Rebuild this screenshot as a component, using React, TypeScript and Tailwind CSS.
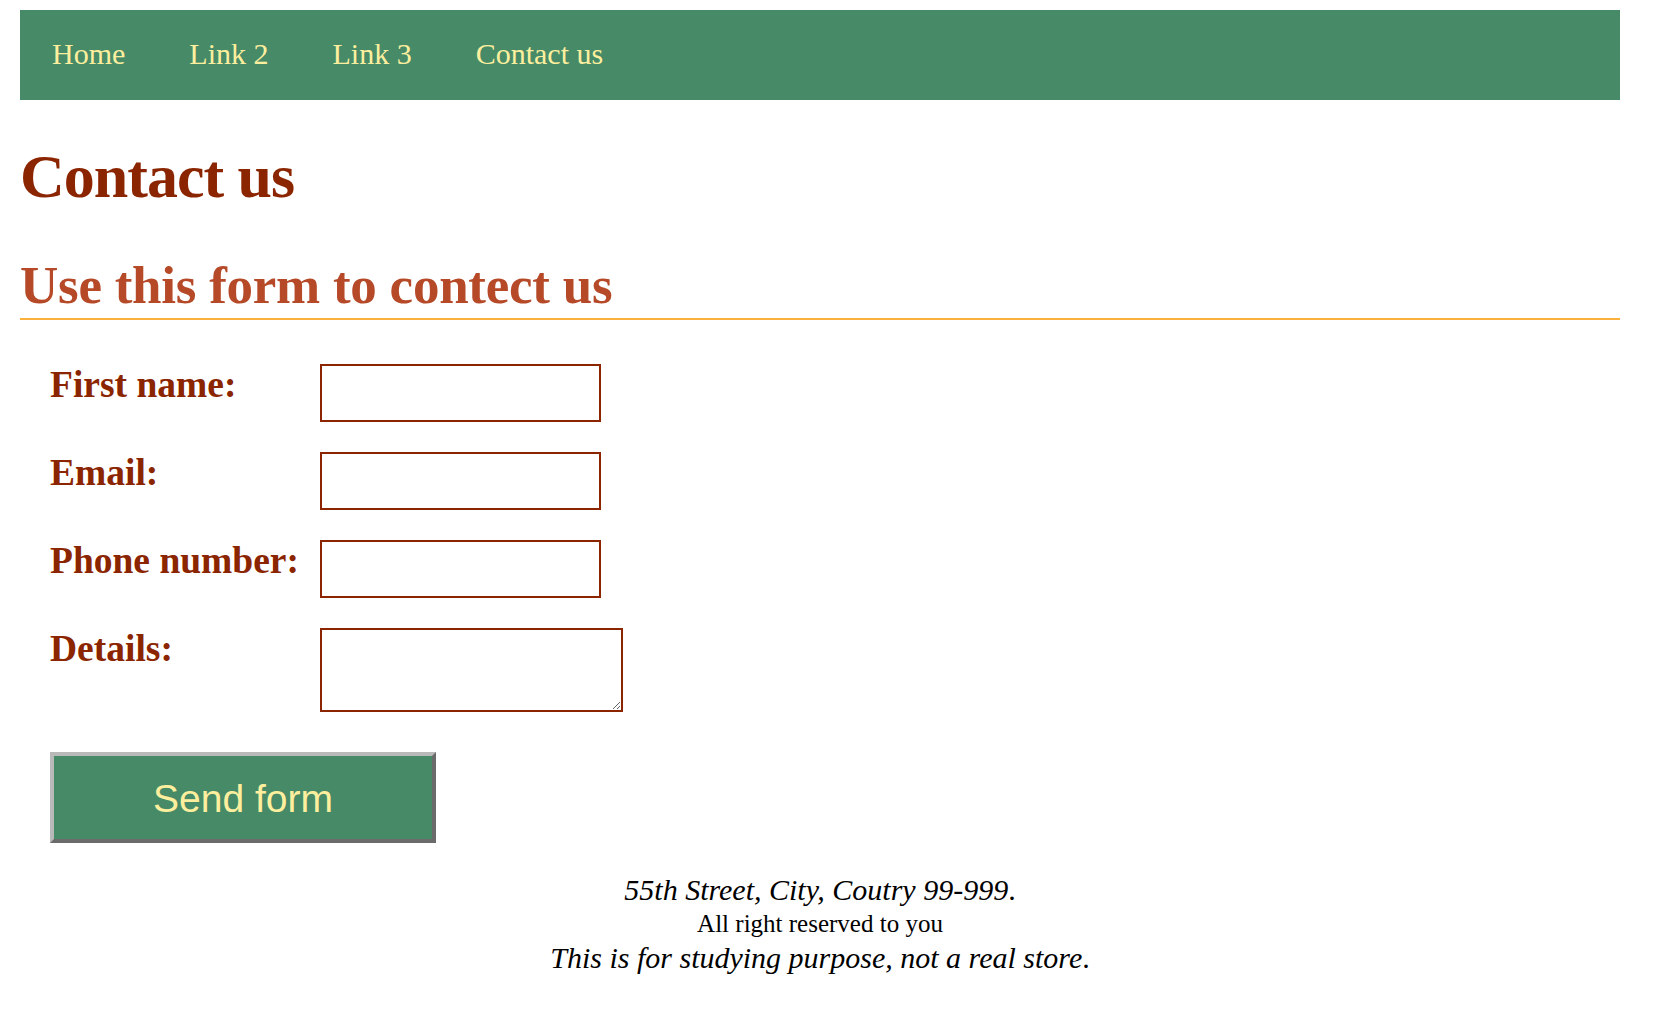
import React from "react";

const fields = [
  { label: "First name:", type: "text" },
  { label: "Email:", type: "email" },
  { label: "Phone number:", type: "tel" },
];

export default function App() {
  return (
    <div className="min-h-screen bg-white font-['Liberation_Serif','Times_New_Roman',serif] text-black">
      <div className="ml-[20px] w-[1600px] pt-[10px]">
        <nav className="flex h-[90px] items-center bg-[#478a68] pb-[2px]">
          {["Home", "Link 2", "Link 3", "Contact us"].map((l) => (
            <a
              key={l}
              href="#"
              className="px-[32px] text-[30px] leading-[30px] text-[#fdef9e]"
            >
              {l}
            </a>
          ))}
        </nav>

        <h1 className="mt-[45px] text-[62px] font-bold leading-[62px] tracking-[-1px] text-[#8b2500]">
          Contact us
        </h1>

        <h2 className="mt-[52px] border-b-2 border-[#fbb03b] pb-[6px] text-[53px] font-bold leading-[53px] tracking-[-0.25px] text-[#b64a28]">
          Use this form to contect us
        </h2>

        <form className="mt-[44px] flex flex-col pl-[30px]" onSubmit={(e) => e.preventDefault()}>
          <div className="flex flex-col gap-[30px]">
            {fields.map((f) => (
              <div key={f.label} className="flex items-start">
                <label className="mt-[2px] w-[270px] shrink-0 text-[37.5px] font-bold leading-[38px] text-[#8b2500]">
                  {f.label}
                </label>
                <input
                  type={f.type}
                  className="h-[58px] w-[281px] border-2 border-[#8b2500] bg-white px-2 text-[20px] outline-none"
                />
              </div>
            ))}
            <div className="flex items-start">
              <label className="mt-[2px] w-[270px] shrink-0 text-[37.5px] font-bold leading-[38px] text-[#8b2500]">
                Details:
              </label>
              <textarea className="h-[84px] w-[303px] resize border-2 border-[#8b2500] bg-white px-2 text-[20px] outline-none" />
            </div>
          </div>

          <button
            type="submit"
            className="mt-[40px] flex h-[91px] w-[386px] items-center justify-center border-[4px] border-t-[#b9b9b9] border-l-[#b9b9b9] border-b-[#6b6b6b] border-r-[#6b6b6b] bg-[#478a68] pt-[4px] font-['Liberation_Sans',Arial,sans-serif] text-[39px] text-[#fdef9e]"
          >
            Send form
          </button>
        </form>

        <footer className="mt-[30px] text-center">
          <div className="text-[30px] leading-[34px]">
            <em>55th Street, City, Coutry 99-999</em>.
          </div>
          <div className="text-[25px] leading-[34px]">All right reserved to you</div>
          <div className="text-[30px] leading-[34px]">
            <em>This is for studying purpose, not a real store</em>.
          </div>
        </footer>
      </div>
    </div>
  );
}
